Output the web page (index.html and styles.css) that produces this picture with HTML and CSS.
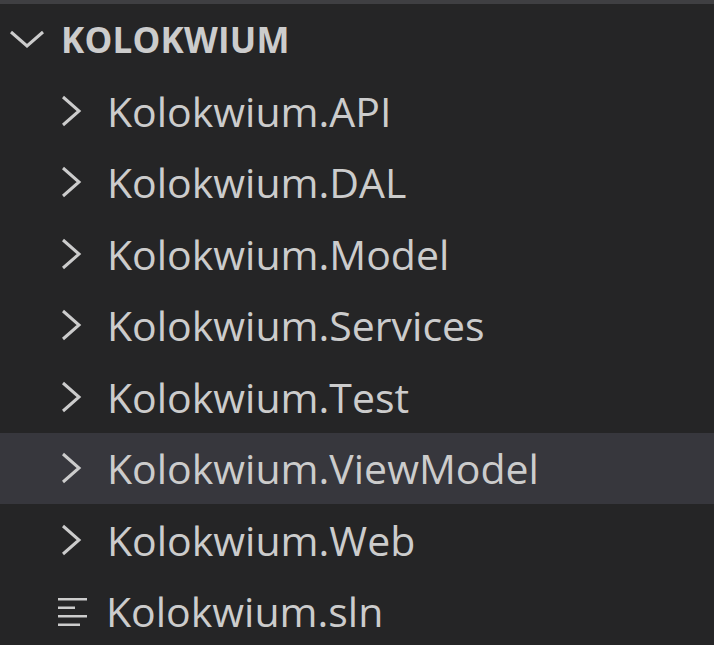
FILE: index.html
```html
<!DOCTYPE html>
<html>
<head>
<meta charset="utf-8">
<link rel="stylesheet" href="styles.css">
</head>
<body>
<div class="topbar"></div>
<div class="explorer">
  <div class="header">
    <svg class="chev-down" width="36" height="20" viewBox="0 0 36 20"><path d="M2 3 L18 17 L34 3" fill="none" stroke="#cccccc" stroke-width="3"/></svg>
    <span class="title">KOLOKWIUM</span>
  </div>
  <div class="row"><svg class="chev" width="22" height="32" viewBox="0 0 22 32"><path d="M3 2 L19 16 L3 30" fill="none" stroke="#cccccc" stroke-width="3"/></svg><span class="name">Kolokwium.API</span></div>
  <div class="row"><svg class="chev" width="22" height="32" viewBox="0 0 22 32"><path d="M3 2 L19 16 L3 30" fill="none" stroke="#cccccc" stroke-width="3"/></svg><span class="name">Kolokwium.DAL</span></div>
  <div class="row"><svg class="chev" width="22" height="32" viewBox="0 0 22 32"><path d="M3 2 L19 16 L3 30" fill="none" stroke="#cccccc" stroke-width="3"/></svg><span class="name">Kolokwium.Model</span></div>
  <div class="row"><svg class="chev" width="22" height="32" viewBox="0 0 22 32"><path d="M3 2 L19 16 L3 30" fill="none" stroke="#cccccc" stroke-width="3"/></svg><span class="name">Kolokwium.Services</span></div>
  <div class="row"><svg class="chev" width="22" height="32" viewBox="0 0 22 32"><path d="M3 2 L19 16 L3 30" fill="none" stroke="#cccccc" stroke-width="3"/></svg><span class="name">Kolokwium.Test</span></div>
  <div class="row hover"><svg class="chev" width="22" height="32" viewBox="0 0 22 32"><path d="M3 2 L19 16 L3 30" fill="none" stroke="#cccccc" stroke-width="3"/></svg><span class="name">Kolokwium.ViewModel</span></div>
  <div class="row"><svg class="chev" width="22" height="32" viewBox="0 0 22 32"><path d="M3 2 L19 16 L3 30" fill="none" stroke="#cccccc" stroke-width="3"/></svg><span class="name">Kolokwium.Web</span></div>
  <div class="row"><svg class="file" width="30" height="30" viewBox="0 0 30 30"><g fill="#cccccc"><rect x="0" y="0" width="29" height="2.5"/><rect x="0" y="8.5" width="17" height="2.5"/><rect x="0" y="17" width="29" height="2.5"/><rect x="0" y="25.5" width="22" height="2.5"/></g></svg><span class="name">Kolokwium.sln</span></div>
</div>
</body>
</html>
```
FILE: styles.css
```css
html, body {
  margin: 0;
  padding: 0;
  background: #252526;
  height: 100%;
  overflow: hidden;
}
.topbar {
  height: 4px;
  background: #3f3f42;
}
.explorer {
  display: flex;
  flex-direction: column;
  font-family: "Open Sans", "Noto Sans", sans-serif;
  color: #cccccc;
}
.header {
  height: 71px;
  display: flex;
  align-items: center;
  padding-left: 9px;
  gap: 16px;
}
.chev-down { margin-top: -1px; }
.title {
  font-weight: 700;
  font-size: 35px;
  letter-spacing: 0.2px;
}
.row {
  height: 71.5px;
  display: flex;
  align-items: center;
  padding-left: 60px;
}
.row.hover {
  background: #37373d;
}
.chev {
  width: 22px;
  margin-right: 25px;
}
.file {
  margin-left: -2px;
  margin-right: 18px;
  margin-top: 4px;
}
.name {
  font-size: 41px;
  white-space: nowrap;
}
```
